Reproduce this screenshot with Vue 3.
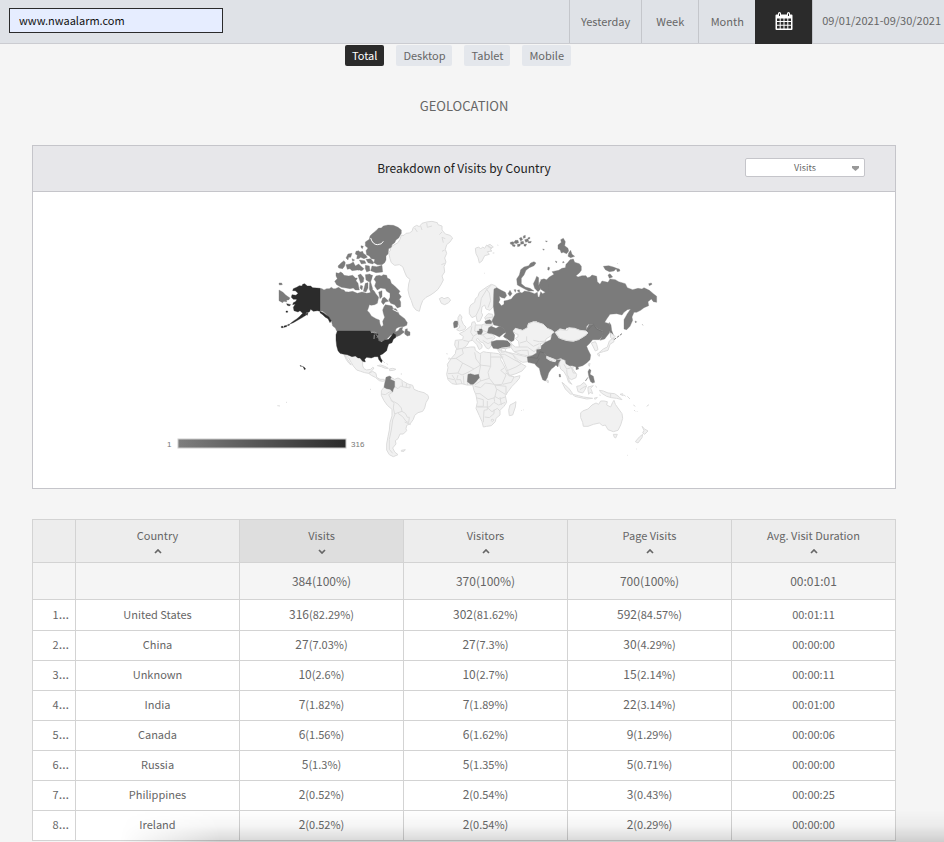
<script setup>
import { ref } from 'vue'

const site = ref('www.nwaalarm.com')
const metric = ref('Visits')
const device = ref('Total')
const devices = ['Total', 'Desktop', 'Tablet', 'Mobile']
const ranges = ['Yesterday', 'Week', 'Month']

const columns = [
  { label: 'Country', sorted: false },
  { label: 'Visits', sorted: true },
  { label: 'Visitors', sorted: false },
  { label: 'Page Visits', sorted: false },
  { label: 'Avg. Visit Duration', sorted: false },
]
const totals = ['', '384(100%)', '370(100%)', '700(100%)', '00:01:01']
const rows = [
  { country: 'United States', counts: [['316', '82.29%'], ['302', '81.62%'], ['592', '84.57%']], duration: '00:01:11' },
  { country: 'China', counts: [['27', '7.03%'], ['27', '7.3%'], ['30', '4.29%']], duration: '00:00:00' },
  { country: 'Unknown', counts: [['10', '2.6%'], ['10', '2.7%'], ['15', '2.14%']], duration: '00:00:11' },
  { country: 'India', counts: [['7', '1.82%'], ['7', '1.89%'], ['22', '3.14%']], duration: '00:01:00' },
  { country: 'Canada', counts: [['6', '1.56%'], ['6', '1.62%'], ['9', '1.29%']], duration: '00:00:06' },
  { country: 'Russia', counts: [['5', '1.3%'], ['5', '1.35%'], ['5', '0.71%']], duration: '00:00:00' },
  { country: 'Philippines', counts: [['2', '0.52%'], ['2', '0.54%'], ['3', '0.43%']], duration: '00:00:25' },
  { country: 'Ireland', counts: [['2', '0.52%'], ['2', '0.54%'], ['2', '0.29%']], duration: '00:00:00' },
]
</script>

<template>
  <div class="page">
    <header class="topbar">
      <input v-model="site" class="site" type="text" aria-label="Website" />
      <nav class="ranges">
        <button v-for="r in ranges" :key="r" type="button" class="range">{{ r }}</button>
        <button type="button" class="range calendar" aria-label="Choose dates">
          <svg width="18" height="18" viewBox="0 0 18 18">
            <path fill="#fff" fill-rule="evenodd" d="M1.500 2.500H3V1.500a1.500 1.500 0 0 1 3 0v1h6v-1a1.500 1.500 0 0 1 3 0v1h1.500a1 1 0 0 1 1 1V17a1 1 0 0 1-1 1h-15a1 1 0 0 1-1-1V3.500a1 1 0 0 1 1-1zM4 1.500V4h1V1.500zM13 1.500V4h1V1.500zM2 6.500V9h2.700V6.500zM5.700 6.500V9h2.800V6.500zM9.500 6.500V9h2.800V6.500zM13.300 6.500V9H16V6.500zM2 10v2.700h2.700V10zM5.700 10v2.700h2.800V10zM9.500 10v2.700h2.800V10zM13.300 10v2.700H16V10zM2 13.700v2.800h2.700v-2.800zM5.700 13.700v2.800h2.800v-2.800zM9.500 13.700v2.800h2.800v-2.800zM13.300 13.700v2.800H16v-2.800z" />
          </svg>
        </button>
        <span class="dates">09/01/2021-09/30/2021</span>
      </nav>
    </header>

    <div class="devices">
      <button v-for="d in devices" :key="d" type="button" class="device" :class="{ active: d === device }" @click="device = d">{{ d }}</button>
    </div>

    <main class="content">
      <h1 class="title">GEOLOCATION</h1>

      <section class="card">
        <div class="card-head">
          <h2 class="card-title">Breakdown of Visits by Country</h2>
          <div class="metric">
            <select v-model="metric" aria-label="Metric">
              <option>Visits</option>
              <option>Visitors</option>
              <option>Page Visits</option>
            </select>
            <svg class="caret" width="7" height="5" viewBox="0 0 7 5"><path d="M0 0h7v2L3.500 5 0 2z" fill="#999" /></svg>
          </div>
        </div>
        <svg class="map" viewBox="33 192 862 296" role="img" aria-label="World map of visits">
          <defs>
            <linearGradient id="scale"><stop offset="0" stop-color="#7e7e7e" /><stop offset="1" stop-color="#2b2b2b" /></linearGradient>
          </defs>

          <g transform="translate(270 210) scale(.333333)">
            <g class="land">
              <path d="M356 128L362 120 360 112 370 106 384 98 390 88 394 76 402 76 408 70 418 69 426 64 430 52 440 46 448 50 456 40 470 36 486 34 502 38 504 44 516 48 516 60 526 72 540 76 548 84 540 96 530 104 526 118 530 130 524 144 528 156 522 170 524 186 516 198 520 210 514 222 504 238 492 248 480 256 468 262 458 272 452 288 448 304 438 300 430 290 424 272 418 258 414 240 416 222 420 208 410 200 404 186 398 170 388 164 374 166 364 158 360 146Z" />
              <path d="M508 266L516 262 522 266 534 262 542 270 536 278 524 284 514 280Z" />
              <path class="line" d="M434 54l8 12M452 48l4 12M470 38l2 14 14-4M516 66l-8 8M526 86l-10-4 4 16M524 120l-8 4M524 160l-10 4" />
            </g>
            <g class="mid">
              <path d="M150 235L156 236 162 240 170 236 178 236 184 232 190 236 196 236 206 232 214 238 222 240 226 245 236 246 248 244 262 250 276 246 290 250 300 248 306 238 312 242 318 252 326 262 322 280 314 284 304 286 298 284 296 292 292 302 298 308 304 318 318 326 328 330 330 342 334 350 340 346 338 334 344 322 340 310 338 300 342 290 346 284 356 286 366 288 370 296 378 296 384 306 388 314 396 320 404 326 412 338 410 346 400 350 388 350 378 356 376 366 384 362 390 354 398 352 396 360 404 366 398 370 390 376 380 380 372 372 362 376 350 388 330 396 322 388 320 372 302 363 200 363 196 354 188 348 184 332 176 322 168 312 158 304 150 302Z" />
              <path d="M406 358l6-2 0 6 8 4 0 10-8 2-8-6zM382 348l8 0-2 4zM198 188L206 190 212 186 218 190 222 196 236 198 248 196 256 204 262 204 258 212 264 220 268 240 256 240 250 234 240 236 228 234 214 232 200 224 194 214 202 206 198 198ZM204 168L214 158 222 152 226 158 224 168 218 176 206 174ZM228 164L240 162 250 156 256 168 266 162 272 168 282 176 276 182 262 180 246 182 240 176 232 178ZM228 144L234 132 246 130 242 142 236 142 234 150ZM246 146l8 4-6 4zM258 124L266 122 270 126 278 124 280 130 288 136 292 142 282 146 272 142 266 146 260 146 262 136 256 132ZM273 107l7 2-3 7-4-4zM268 150l16 2 4 8-14 2zM288 148l14-2 10 12-4 4-14-4z" />
              <path d="M286 96L298 88 300 78 306 72 318 62 326 54 334 54 340 48 354 45 370 46 384 52 394 60 394 70 386 84 378 90 374 98 366 104 364 112 356 116 354 132 348 138 348 150 344 158 336 164 322 164 312 158 314 148 304 146 298 138 290 134 288 122 294 114 286 108Z" />
              <path d="M306 168L320 170 336 166 338 186 318 188 302 182ZM286 166l12 2 2 14-10 4-4-10zM264 196L272 192 282 204 280 216 272 220ZM286 194l14-2 4 14-6 10-10-6zM286 220l8-2 0 16-6 12-8-2zM272 226l6 2-2 12-6-6zM326 246L336 242 336 260 330 266ZM338 264l6-2 12 12-10 2-6 8-6-8z" />
              <path d="M318 198L328 196 334 198 340 194 350 196 352 204 360 208 364 220 374 228 384 238 390 244 386 250 394 260 388 268 392 276 392 290 382 294 374 284 362 280 356 270 360 262 360 250 350 244 346 236 332 234 322 240 314 228 318 216 312 208Z" />
              <path d="M27 240L38 246 48 256 60 264 56 270 50 270 50 276 42 274 38 278 27 272ZM27 219l8 0 2 5-9 1zM300 194l8 2-6 20 6 20-6 10-4-8z" />
              <path class="cut" d="M302 84q6 20 20 20t18-10M256 190l14-8M368 298l16 8" />
            </g>
            <g class="dark">
              <path d="M150 235L140 234 128 233 122 228 112 228 104 221 98 223 96 228 88 227 80 232 70 236 68 242 76 242 84 250 78 256 66 254 64 262 70 268 80 268 78 274 70 278 68 284 76 282 70 292 72 302 84 306 90 302 98 310 88 320 80 327 72 332 64 338 60 342 70 338 84 330 98 322 110 314 108 308 118 306 122 298 130 304 142 302 150 304 160 308 168 314 176 320 184 332 180 338 174 326 166 322 158 314 150 308ZM34 349l5 0 1 4-6 0zM42 348l8-2 0 4-8 2zM53 344l6-2-1 4-5 1zM50 281l12 3-4 4-6-2zM48 303l5 0 0 4-5 0zM106 312l8-4-2 8z" />
            </g>
          </g>

          <g transform="translate(270 320) scale(.333333)">
            <g class="land">
              <path d="M222 102L246 108 256 108 270 114 278 124 278 138 282 146 290 150 302 148 308 142 312 144 306 152 296 160 284 158 272 154 260 150 250 138 244 128 236 114ZM222 104l8 10 8 12 6 9-7-5-8-11zM296 160L308 154 318 160 320 172 330 178 342 178 346 182 338 184 328 182 316 172 304 166Z" />
              <path d="M322 137l10-2 12 4 11 6-9 0-12-5zM358 147l10-2 10 3-7 3-12 1zM340 124l5 5M350 130l3 4M394 160l0 4M394 391l12-2-4 5-8 0zM300 207l3 2" />
              <path d="M362 172L374 178 384 174 392 178 400 184 414 192 428 196 432 208 446 214 462 218 474 226 476 234 468 248 464 264 458 274 444 278 434 286 430 298 420 312 410 316 408 326 410 332 400 342 390 342 384 356 376 362 378 372 368 384 374 396 384 404 370 410 358 404 350 390 350 372 354 350 358 330 360 308 366 288 366 268 352 256 342 242 334 226 334 212 342 202 348 190Z" />
              <path class="line" d="M334 222l12 2 12-8 8 0M368 216l-12 8 8 16 8 10-2 14 4 18 10-4 12-4-2-10-10-12-14-8-8-2M396 274l10 6 6 12 6 0-2 16-8-4-10-14-14-10M376 280l-8 20-4 30-6 28 0 30 10 12M404 306l18 8M396 184l2 16 10 2 2-12M420 196l0 8-12-2M374 200l10 6 8-8 6 2M22 257l8 1M48 247l3 0" />
            </g>
            <path class="mid" d="M348 172L358 168 364 171 361 178 374 184 374 200 370 208 368 216 360 208 350 206 342 202 344 190 346 182Z" />
            <path class="dark" d="M202 33L300 33 312 40 324 42 322 50 326 62 334 66 344 60 356 58 364 48 370 40 377 44 378 52 370 58 366 68 356 72 352 84 350 92 338 102 330 106 332 114 337 122 334 128 326 118 324 110 314 110 304 114 290 112 284 118 286 126 278 124 270 114 264 114 256 108 246 110 232 104 218 102 210 100 204 92 200 78 198 60 198 44ZM90 136l5 2-2 2zM97 139l6 3 4 5-4 2-2-6z" />
            <path class="lake" d="M303 38l10-2 7 3M313 44l-1 13M318 43l5 6-2 4" />
          </g>

          <g transform="translate(440 225) scale(.333333)">
            <g class="land">
              <path d="M106 70L116 66 122 72 128 66 134 70 140 60 156 70 150 74 156 78 142 80 148 88 134 92 126 108 118 114 114 98 108 86ZM142 62l8-4 10 8-10 4zM158 84l5 0M172 60l3 1M132 144l2 1M54 278L60 268 66 276 64 284 70 298 78 306 74 314 58 318 50 314 60 306 54 296Z" />
              <path d="M88 250L92 240 104 232 106 222 114 214 118 202 126 196 140 186 154 178 166 182 172 190 162 194 160 216 164 240 150 256 138 252 134 240 126 246 124 262 128 270 120 288 112 290 108 272 96 278 88 266Z" />
              <path d="M46 346L68 344 70 334 58 326 74 318 84 310 94 302 96 292 104 290 108 300 124 300 136 296 138 286 134 278 144 266 158 268 160 300 146 310 144 324 160 330 166 338 154 348 154 362 146 372 138 368 130 354 120 350 114 340 108 344 126 360 126 368 118 374 110 358 98 346 88 348 80 362 66 372 50 372 44 360Z" />
              <path class="line" d="M154 180l-14 14-16 26-4 26-12 26M138 190l10 14 4 22-8 22M96 304l-4 18 8 12-6 14M106 300l-2 18 10 4M126 300l-2 14 18 8M70 346l18 4M56 348l-2 22M100 334l12-8 14 4 16-6M128 330l12 12 18-4M134 300l24 0M136 280l22-4M128 346l16 10 8-4" />
            </g>
            <g class="mid">
              <path d="M162 192L170 188 184 196 196 202 200 212 194 220 186 218 178 214 180 224 176 232 184 242 192 238 192 228 202 226 214 222 220 214 228 206 240 202 246 204 254 198 268 200 284 206 292 202 294 216 298 216 302 200 308 206 316 202 304 194 296 182 300 170 310 162 320 164 328 156 342 148 336 140 356 136 366 130 376 128 378 118 384 112 390 104 400 102 404 112 418 116 424 124 424 136 418 144 408 152 414 156 426 152 438 152 442 158 450 156 456 150 470 154 472 170 480 178 486 168 504 172 510 162 526 164 536 170 556 176 562 188 578 194 594 190 606 192 612 188 628 196 640 206 650 214 650 232 640 230 634 222 624 230 626 242 612 248 602 256 590 262 582 262 576 276 578 286 570 304 560 314 552 312 552 284 562 266 572 252 562 254 552 262 546 270 530 266 510 268 500 282 494 292 508 296 512 310 508 324 494 342 480 346 488 330 488 318 470 310 460 298 446 298 440 304 438 320 420 316 404 310 380 308 376 314 360 310 350 318 344 322 336 316 322 312 310 298 292 294 290 288 280 290 264 294 266 308 248 316 226 310 218 318 224 330 222 346 214 350 196 340 190 334 198 324 190 310 178 304 162 300 156 288 164 270 160 244Z" />
              <path d="M232 180L230 162 238 150 242 134 252 126 266 122 272 114 282 110 288 114 282 122 268 128 258 136 252 150 244 160 244 176 256 186 270 190 282 198 266 198 250 190ZM284 190L280 176 286 164 290 154 296 158 296 180 302 192 294 200ZM302 164l12-2 12 18-2 14 10 8-10 2-16-14zM210 196l6 10-6 8-6-8zM222 194l6 0-2 8zM232 196l6-2 2 6-6 0zM354 60L364 52 362 44 370 40 376 50 374 62 384 70 386 78 380 86 370 82 364 84 360 74 354 72ZM386 84L392 76 396 88 404 94 392 98 384 94ZM490 124L506 122 520 126 530 130 522 138 508 140 496 134ZM528 130l10 2 2 6-8 2zM532 115l2 2M504 150l6-4 8 10-10 4zM626 176l8-2 2 4-8 4zM508 292l5 8 2 16 6 16-8 4-4-20zM585 288l5 2-3 4zM607 298l2 3zM316 48l6 0-2 3zM308 72l5 1-2 3zM324 126l5 2-2 8-4-2zM346 108l5 2-2 4zM369 109l4 3-5 2z" />
              <path d="M211 52l8-2 5 4-7 5-6-2zM226 46l8 0 2 7-8 3-6-4zM238 40l6-3 4 7-6 4zM250 33l6-2 0 7-6 2zM254 44l10-3 2 8-9 3zM264 38l6-1-1 5-5 0zM242 50l8-1 2 7-10 2zM232 58l9-1-1 6-7 2zM218 58l8 2-2 5-7-2zM252 58l8-1-3 7-5-1zM264 50l10-1-2 5-7 0z" />
              <path d="M146 308L154 304 168 310 178 304 190 308 198 322 190 326 178 336 166 330 156 326 142 324ZM134 290L142 286 150 284 156 290 154 296 138 296ZM112 318l6 0 0-6 8 0 2 8-4 8-10 0zM154 350L170 346 190 346 206 348 212 354 210 368 196 370 176 372 160 370 154 360ZM40 294L44 288 52 288 54 294 52 306 42 309Z" />
              <path class="dash" d="M522 344L546 326" />
            </g>
          </g>

          <g transform="translate(440 325) scale(.333333)">
            <g class="land">
              <path d="M48 74L66 70 92 66 104 66 106 76 120 86 130 80 140 82 160 84 176 86 184 94 182 104 190 118 196 130 206 152 224 156 240 152 238 160 228 172 216 184 204 200 196 212 200 232 192 244 180 256 180 270 168 280 166 290 154 302 140 304 130 306 126 290 118 272 108 250 112 232 108 210 102 196 98 180 80 180 66 176 48 178 36 176 24 164 20 148 24 128 22 118 34 100 46 86Z" />
              <path d="M172 74L184 70 212 66 222 80 240 88 262 92 280 92 290 84 290 76 304 64 300 56 316 52 318 42 334 32 342 22 336 16 322 10 310 -2 292 -8 280 -10 264 -2 262 8 248 16 226 10 220 18 226 26 234 28 234 36 226 40 236 50 238 66 226 66 218 60 208 48 196 40 214 58 212 66 184 70 174 76 182 88 190 106 200 130 208 152 228 146 246 138 258 124 244 116 228 104 218 88 236 106 248 112 264 110 262 96Z" />
              <path d="M360 106L372 102 378 116 388 118 400 124 398 132 410 148 408 158 394 164 386 158 384 152 388 168 396 178 386 172 380 154 372 140 362 132 358 118ZM520 38L522 50 510 58 504 76 490 80 476 84 490 72 502 66 508 48ZM512 24l10 8 4 2-8 8-6-4zM474 84l5 4-1 6-5-4zM454 54L466 50 470 58 474 74 466 78 460 66ZM448 114l2 2-2 8-3-5z" />
              <path d="M366 172L376 180 388 192 398 206 392 208 376 192ZM398 208L416 212 430 216 458 220 440 222 404 214ZM410 184L420 182 432 172 440 182 434 196 428 204 414 200ZM444 186l16-4-8 8 2 4 4 12-8-4-4 6-2-14zM478 196L490 198 504 204 524 206 538 216 546 224 530 220 514 218 500 214 484 204ZM462 220l10-3-6 6zM467 182l3 6M478 210l4 1M540 208l8-2 2 6zM552 210l5 4M562 214l8 8M580 240l6 4M582 255l4 4M590 258l2 2M620 244l7-5M588 372l2 0M562 391l2 0M19 86l4 1M26 99l3 0M244 256l2 2M250 255l2-1M320 165l5 2 0 6-4-2z" />
              <path d="M422 264L428 258 444 252 456 240 468 234 476 238 482 228 492 228 502 230 500 240 512 246 518 232 522 226 526 238 536 252 546 266 548 280 542 300 534 316 520 320 504 314 496 300 488 302 478 294 460 298 444 304 430 304 428 292 422 278ZM520 328l12 0-5 11-4-2zM606 304L614 312 624 318 614 328 608 324 612 316ZM608 328L606 338 594 354 586 350 598 336ZM210 240L222 234 228 230 226 246 218 270 208 272 206 256Z" />
              <path class="line" d="M66 70l4 16-22 14-24 2M48 100l20 14 34 18 20-12-14-18-4-20M68 114l-14 30-30 2M122 88l-2 32 32 4 0-40M152 96l38 0M152 124l-8 18 4 18-26 8-6-16 6-32M54 144l12 6 18-8 18-10M84 148l-2 32M36 150l8 12 6 16M54 150l-4 14 12 0 4 14M70 152l2 26M24 160l18 4M148 160l16 20 22-2 12-28-16-14 12-8M122 168l-18 12M104 184l18 4 14-14 28 4 6 16-6 24-20 6-24-18-12 0M108 218l22 6 0 20-22 0M142 228l0 26-10 2-2 36M112 246l36 0 14-14 14 8 20-8M164 180l34 4 0 26M142 248l14 12 16-10 8 8M134 276l14 2 14-12 0-12M156 282l6 3-5 5-4-4zM196 144l26 12-8 16-26 6M170 192l26 16M164 214l14 8 18-6M164 230l-2-12M180 216l4 24M184 70l0 12 12-2 0-12M180 88l14 0 28 16 22 12M204 136l24-10 16-10M196 80l22 8M212 66l4-6M222 80l22-4 20 0 2 18M240 54l20-6 20 16 18-8M260 48l0-14M238 66l24 0 20 14 16-16M280 46l18 4 20-2M372 118l8 14 14-4 6 16 8 0M380 134l2 20M388 120l12 16M420 194l12-8 8-2M512 206l0 12" />
            </g>
            <g class="mid">
              <path d="M304 62L316 52 332 44 336 28 344 22 356 40 380 48 400 50 420 42 440 30 436 18 448 -2 462 -2 470 10 488 18 490 30 478 44 458 44 448 56 440 64 444 74 452 90 450 104 440 114 428 122 414 126 416 132 408 134 408 126 398 122 388 122 378 116 376 106 362 100 348 104 336 100 320 94 312 84 302 78Z" />
              <path d="M262 96L276 92 290 84 290 74 302 72 312 82 320 94 318 100 330 108 346 112 350 104 362 104 356 114 354 126 348 120 342 126 334 132 326 144 322 158 316 168 308 164 302 148 298 130 290 124 284 116 264 112ZM84 148L92 146 104 150 116 148 118 158 108 170 100 178 92 178 82 170ZM444 140L448 132 453 136 450 148 460 154 464 172 458 174 452 170 448 160 446 152ZM436 167l8-10-6 10zM357 148l4 0 1 8-4 0z" />
              <path class="border" d="M262 96l30 4 8-20 12 4M288 118l10-18M440 18l20-20 10 14 18 8" />
            </g>
            <g class="land">
              <path d="M346 22L360 14 382 16 386 8 404 10 420 16 438 18 444 24 432 34 416 44 400 48 380 46 360 40ZM320 94L346 104 342 110 322 101Z" />
            </g>
          </g>

          <rect x="178" y="439" width="168" height="9" fill="url(#scale)" stroke="#ccc" stroke-width="1" />
          <text class="legend" x="167" y="447">1</text>
          <text class="legend" x="351" y="447">316</text>
        </svg>
      </section>

      <table class="report">
        <colgroup>
          <col class="narrow" /><col /><col /><col /><col /><col />
        </colgroup>
        <thead>
          <tr>
            <th></th>
            <th v-for="c in columns" :key="c.label" :class="{ sorted: c.sorted }">
              <button type="button" class="sort">
                {{ c.label }}
                <svg width="8" height="5" viewBox="0 0 8 5"><path :d="c.sorted ? 'M1 1L4 4L7 1' : 'M1 4L4 1L7 4'" fill="none" stroke="#666" stroke-width="1.700" /></svg>
              </button>
            </th>
          </tr>
        </thead>
        <tbody>
          <tr class="totals">
            <td></td>
            <td v-for="(t, i) in totals" :key="i">{{ t }}</td>
          </tr>
          <tr v-for="(row, i) in rows" :key="row.country">
            <td class="index">{{ i + 1 }}<span class="more">…</span></td>
            <td>{{ row.country }}</td>
            <td v-for="(c, j) in row.counts" :key="j"><span class="count">{{ c[0] }}</span>({{ c[1] }})</td>
            <td>{{ row.duration }}</td>
          </tr>
        </tbody>
      </table>
    </main>
    <div class="shade"></div>
  </div>
</template>

<style>
body {
  background: #f5f5f5;
}
</style>

<style scoped>
.page {
  position: relative;
  height: 100vh;
  overflow: hidden;
  background: #f5f5f5;
  color: #666;
  font-family: "Noto Sans CJK SC", "Noto Sans", sans-serif;
  font-size: 11px;
  line-height: 18px;
}
.page * {
  box-sizing: border-box;
}
button, input, select {
  font: inherit;
  color: inherit;
  margin: 0;
}
button {
  border: 0;
  background: none;
  padding: 0;
}
.topbar {
  display: flex;
  justify-content: space-between;
  height: 44px;
  padding-left: 9px;
  background: #dfe2e7;
  border-bottom: 1px solid #cbccd1;
}
.site {
  width: 214px;
  height: 25px;
  margin-top: 8px;
  padding: 0 9px 2px;
  border: 1px solid #2b2b2b;
  background: #e6edff;
  color: #111;
}
.ranges {
  display: flex;
}
.range {
  min-width: 57px;
  padding: 0 11px 2px;
  border-left: 1px solid #c4c6cb;
}
.calendar {
  display: flex;
  align-items: center;
  justify-content: center;
  height: 44px;
  background: #2b2b2b;
  border-color: #2b2b2b;
}
.dates {
  padding: 0 3px 0 9px;
  border-left: 1px solid #c4c6cb;
  line-height: 40px;
}
.devices {
  display: flex;
  justify-content: center;
  gap: 12px;
  margin-top: 1px;
  padding-right: 28px;
}
.device {
  height: 21px;
  padding: 0 7px 2px;
  border-radius: 2px;
  background: #e4e7ec;
}
.device.active {
  background: #2b2b2b;
  color: #fff;
}
.content {
  padding: 27px 48px 0 32px;
}
.title {
  margin: 0 0 26px;
  font-size: 13px;
  line-height: 26px;
  font-weight: 400;
  text-align: center;
}
.card {
  margin-bottom: 30px;
  border: 1px solid #c5c5ca;
  background: #fff;
}
.card-head {
  display: grid;
  grid-template-columns: 1fr auto 1fr;
  align-items: center;
  height: 46px;
  padding: 0 30px 2px;
  background: #e7e7ea;
  border-bottom: 1px solid #c5c5ca;
}
.card-title {
  grid-column: 2;
  margin: 0;
  font-size: 12px;
  font-weight: 400;
  color: #222;
}
.metric {
  position: relative;
  justify-self: end;
  width: 120px;
  height: 19px;
}
.metric select {
  display: block;
  width: 100%;
  height: 19px;
  padding: 0;
  appearance: none;
  border: 1px solid #c5c5ca;
  border-radius: 2px;
  background: #fff;
  font-size: 9px;
  line-height: 17px;
  text-align: center;
  text-align-last: center;
}
.caret {
  position: absolute;
  right: 6px;
  top: 8px;
}
.map {
  display: block;
  width: 100%;
  height: auto;
}
.land path {
  fill: #f1f1f1;
  stroke: #dcdcdc;
  stroke-width: 3;
  stroke-linejoin: round;
}
.land .line {
  fill: none;
}
.mid {
  fill: #7b7b7b;
  stroke: #7b7b7b;
  stroke-width: 1;
}
.mid .cut {
  fill: none;
  stroke: #fff;
  stroke-width: 3;
}
.mid .border {
  fill: none;
  stroke: #6d6d6d;
  stroke-width: 2;
}
.mid .dash {
  fill: none;
  stroke-width: 3;
  stroke-dasharray: 8 3;
}
.dark {
  fill: #2b2b2b;
  stroke: #2b2b2b;
  stroke-width: 1;
}
.lake {
  fill: none;
  stroke: #999;
  stroke-width: 3;
}
.legend {
  font-family: "Liberation Sans", sans-serif;
  font-size: 8px;
  fill: #777;
}
.report {
  width: 100%;
  table-layout: fixed;
  border-collapse: separate;
  border-spacing: 0;
  border-top: 1px solid #d3d3d3;
  border-left: 1px solid #d3d3d3;
  background: #fff;
  text-align: center;
}
.narrow {
  width: 43px;
}
.report th,
.report td {
  height: 30px;
  padding: 0 0 3px;
  border-right: 1px solid #d3d3d3;
  border-bottom: 1px solid #d3d3d3;
  font-weight: 400;
}
.report th {
  height: 43px;
  background: #ededed;
}
.report th.sorted {
  background: #dedede;
}
.sort {
  display: flex;
  flex-direction: column;
  align-items: center;
  gap: 5px;
  width: 100%;
}
.report .totals td {
  height: 37px;
  padding: 0;
  background: #f5f5f5;
  font-size: 12px;
}
.report .totals + tr td {
  height: 31px;
}
.report .index {
  padding-right: 6px;
  text-align: right;
}
.more {
  font-family: "Noto Sans", sans-serif;
  font-size: 13px;
}
.count {
  font-size: 12px;
}
.shade {
  position: absolute;
  right: 0;
  bottom: 0;
  left: 120px;
  height: 32px;
  background: linear-gradient(to top, rgba(0, 0, 0, 0.16), rgba(0, 0, 0, 0.04) 50%, transparent);
  mask-image: linear-gradient(to right, transparent, #000 100px);
  pointer-events: none;
}
</style>
